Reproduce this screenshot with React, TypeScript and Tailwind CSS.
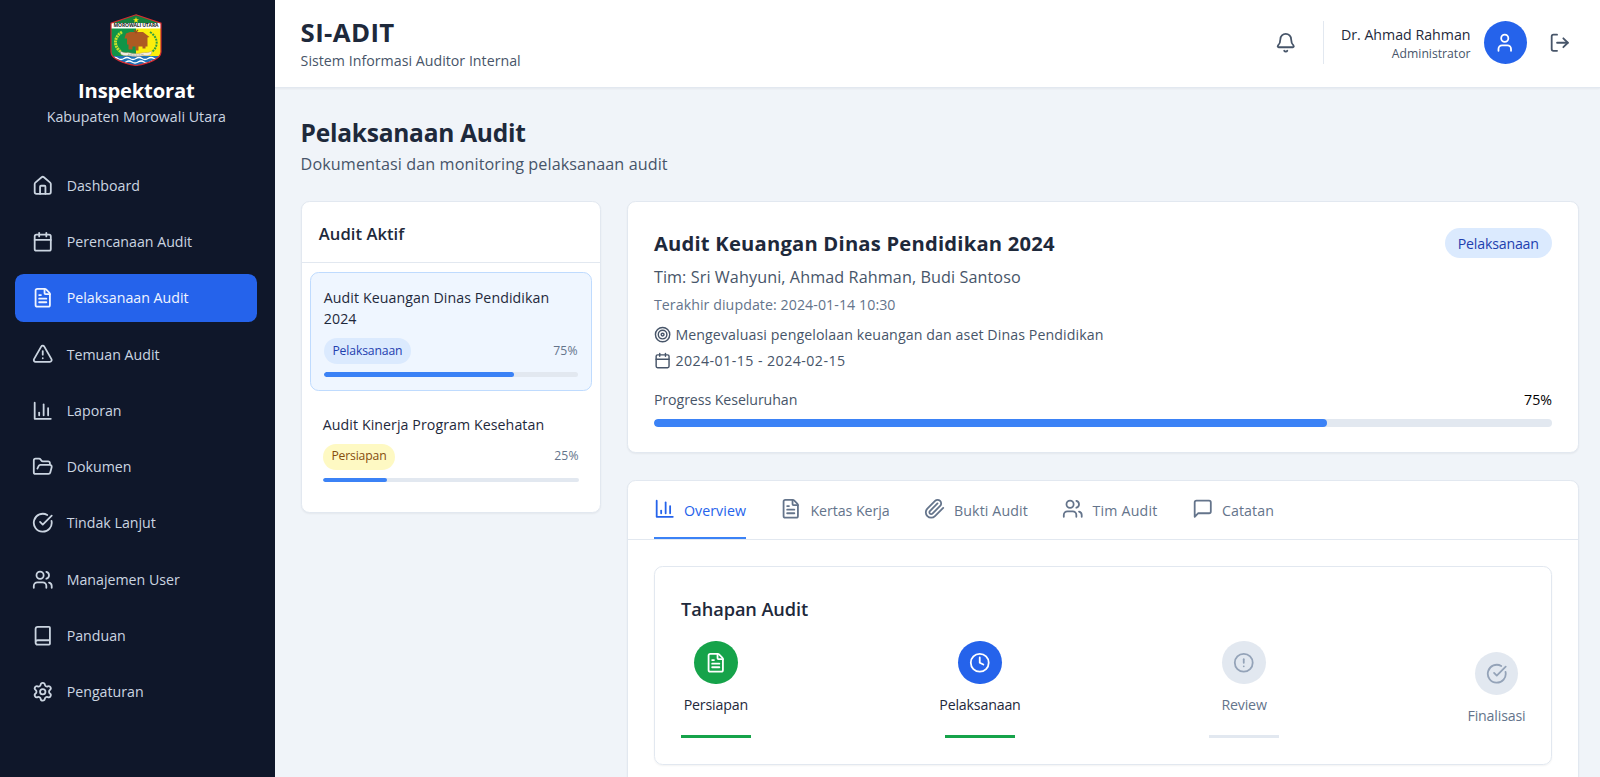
import React from "react";
import {
  Bell,
  Book,
  Calendar,
  CircleAlert,
  CircleCheckBig,
  Clock,
  FileText,
  FolderOpen,
  House,
  LogOut,
  Settings,
  Target,
  TriangleAlert,
  User,
  Users,
} from "lucide-react";

type IconProps = { className?: string };
type IconType = React.ComponentType<IconProps>;

function Stroke({ className, children }: { className?: string; children: React.ReactNode }) {
  return (
    <svg
      viewBox="0 0 24 24"
      fill="none"
      stroke="currentColor"
      strokeWidth="2"
      strokeLinecap="round"
      strokeLinejoin="round"
      className={className}
    >
      {children}
    </svg>
  );
}

const BarChart: IconType = ({ className }) => (
  <Stroke className={className}>
    <path d="M3 3v18h18" />
    <path d="M18 17V9" />
    <path d="M13 17V5" />
    <path d="M8 17v-3" />
  </Stroke>
);

const Clip: IconType = ({ className }) => (
  <Stroke className={className}>
    <path d="m21.44 11.05-9.19 9.19a6 6 0 0 1-8.49-8.49l8.57-8.57A4 4 0 1 1 18 8.84l-8.59 8.57a2 2 0 0 1-2.83-2.83l8.49-8.48" />
  </Stroke>
);

const Message: IconType = ({ className }) => (
  <Stroke className={className}>
    <path d="M21 15a2 2 0 0 1-2 2H7l-4 4V5a2 2 0 0 1 2-2h14a2 2 0 0 1 2 2z" />
  </Stroke>
);

function Crest() {
  return (
    <svg viewBox="0 0 52 52" className="h-[52px] w-[52px] shrink-0">
      <defs>
        <clipPath id="shield">
          <path d="M26 0.8 51 9.2V38c0 7-13 11.500-25 13.500C14 49.500 1 45 1 38V9.200Z" />
        </clipPath>
      </defs>
      <g clipPath="url(#shield)">
        <rect width="26" height="52" fill="#119447" />
        <rect x="26" width="26" height="52" fill="#fbee0c" />
        <path d="M0 10 26 0l26 10Z" fill="#15803d" />
        <rect y="9" width="52" height="5.500" fill="#fff" />
        <rect y="42" width="52" height="10" fill="#1e73b8" />
        <path d="M2 44.500q3-2 6 0t6 0 6 0 6 0 6 0 6 0 6 0 6 0" fill="none" stroke="#fff" strokeWidth="1.300" />
        <path d="M4 48q3-2 6 0t6 0 6 0 6 0 6 0 6 0 6 0" fill="none" stroke="#fff" strokeWidth="1.300" />
      </g>
      <path d="m26 3 .8 2.200h2.300l-1.900 1.400.7 2.200L26 7.500l-1.900 1.300.7-2.200-1.900-1.400h2.300Z" fill="#fde910" />
      <text x="26" y="13.400" textAnchor="middle" textLength="45" fontSize="5" fontWeight="700" fill="#222" fontFamily="Open Sans, sans-serif">
        MOROWALI UTARA
      </text>
      <path d="M12 18C4 23 3 32 11 38" fill="none" stroke="#c6e02c" strokeWidth="3" strokeDasharray="2 .7" />
      <path d="M40 18C48 23 49 32 42 38" fill="none" stroke="#2f9e3f" strokeWidth="2" strokeDasharray="2 1" />
      <path d="m16 19.500 4-1.500h13l6.500 5-2 .5v9h-2v2h-3v-2h-4v4h-3v-4h-3v3h-4v-5h-1.500v-6h-2.500Z" fill="#ad5a22" />
      <path d="m25 19 3-3m-1 3-3-3" stroke="#9a4e1d" strokeWidth="1.200" />
      <path d="M10 37q4 2.500 8 1.500 8 2.500 16 0 4 1 8-1.500l-1 3.500q-4 2-7 1-8 2-16 0-3 1-7-1Z" fill="#f3efe4" stroke="#b98a5e" strokeWidth=".4" />
      <path d="M18 40.200q8 1.800 16 0" fill="none" stroke="#8a8a80" strokeWidth=".8" strokeDasharray="1 .6" />
      <path d="M26 0.800 51 9.200V38c0 7-13 11.500-25 13.500C14 49.500 1 45 1 38V9.200Z" fill="none" stroke="#d3292f" strokeWidth="1.200" />
    </svg>
  );
}

const nav: { label: string; icon: IconType; active?: boolean }[] = [
  { label: "Dashboard", icon: House },
  { label: "Perencanaan Audit", icon: Calendar },
  { label: "Pelaksanaan Audit", icon: FileText, active: true },
  { label: "Temuan Audit", icon: TriangleAlert },
  { label: "Laporan", icon: BarChart },
  { label: "Dokumen", icon: FolderOpen },
  { label: "Tindak Lanjut", icon: CircleCheckBig },
  { label: "Manajemen User", icon: Users },
  { label: "Panduan", icon: Book },
  { label: "Pengaturan", icon: Settings },
];

function Sidebar() {
  return (
    <aside className="flex w-[274.600px] shrink-0 flex-col bg-[#0f172a]">
      <div className="flex flex-col items-center pr-[2px] pt-[14px]">
        <Crest />
        <h1 className="mt-[9px] text-[20.200px] leading-[30px] font-bold tracking-[-0.200px] text-white">Inspektorat</h1>
        <p className="mt-[1px] text-[14.200px] leading-[21.500px] tracking-[0.040px] text-[#cbd5e1]">Kabupaten Morowali Utara</p>
      </div>
      <nav className="mt-[34px] flex flex-col gap-[8.600px] pr-[17.500px] pl-[15px]">
        {nav.map(({ label, icon: Icon, active }) => (
          <a
            key={label}
            className={
              active
                ? "flex h-[47.700px] items-center gap-[13px] rounded-[8.600px] bg-[#2563eb] pl-[17.200px] text-[14.200px] text-[#f1f5ff]"
                : "flex h-[47.700px] items-center gap-[13px] rounded-[8.600px] pl-[17.200px] text-[14.200px] text-[#cbd5e1]"
            }
          >
            <Icon className="h-[21.500px] w-[21.500px]" />
            {label}
          </a>
        ))}
      </nav>
    </aside>
  );
}

function Header() {
  return (
    <header className="flex h-[88px] shrink-0 justify-between border-b border-[#e2e8f0] bg-white pr-[30px] pl-[26px] shadow-xs">
      <div className="pt-[14.500px]">
        <h2 className="text-[25.800px] leading-[34.400px] font-bold tracking-[0.380px] text-[#1e293b]">SI-ADIT</h2>
        <p className="mt-[0.800px] text-[14.200px] leading-[22px] tracking-[0.020px] text-[#475569]">Sistem Informasi Auditor Internal</p>
      </div>
      <div className="flex h-[85px] items-center">
        <Bell className="h-[21.500px] w-[21.500px] text-[#475569]" />
        <div className="ml-[27px] flex h-[43px] items-center border-l border-[#e2e8f0] pl-[16.500px]">
          <div className="pt-[1px] text-right">
            <p className="text-[14.200px] leading-[21.500px] text-[#1e293b]">Dr. Ahmad Rahman</p>
            <p className="text-[12.200px] leading-[17.200px] text-[#475569]">Administrator</p>
          </div>
          <div className="ml-[13px] flex h-[43px] w-[43px] items-center justify-center rounded-full bg-[#2563eb] text-white">
            <User className="h-[21.500px] w-[21.500px]" />
          </div>
        </div>
        <LogOut className="ml-[22px] h-[21.500px] w-[21.500px] text-[#475569]" />
      </div>
    </header>
  );
}

function AuditItem({ title, status, pct, active }: { title: string; status: string; pct: number; active?: boolean }) {
  return (
    <div
      className={
        active
          ? "rounded-[8.600px] border border-[#bfdbfe] bg-[#eff6ff] px-[13px] pt-[14px] pb-[13px]"
          : "rounded-[8.600px] px-[13px] pt-[14px] pb-[13px]"
      }
    >
      <h4 className="text-[14.200px] leading-[21.500px] tracking-[0.070px] text-[#1e293b]">{title}</h4>
      <div className="mt-[8.500px] flex items-center justify-between">
        <span
          className={
            active
              ? "flex h-[26px] items-center rounded-full bg-[#dbeafe] px-[8.600px] text-[12.200px] tracking-[-0.130px] text-[#1e40af]"
              : "flex h-[26px] items-center rounded-full bg-[#fef9c3] px-[8.600px] text-[12.200px] tracking-[-0.160px] text-[#854d0e]"
          }
        >
          {status}
        </span>
        <span className="text-[12.200px] tracking-[0.150px] text-[#64748b]">{pct}%</span>
      </div>
      <div className="mt-[8.200px] h-[4.500px] overflow-hidden rounded-full bg-[#e2e8f0]">
        <div className="h-full rounded-full bg-[#3b82f6]" style={{ width: `${pct}%` }} />
      </div>
    </div>
  );
}

function AuditList() {
  return (
    <section className="h-[311.500px] w-[300.300px] shrink-0 rounded-[8.600px] border border-[#e2e8f0] bg-white shadow-xs">
      <div className="flex h-[60.500px] items-center border-b border-[#e2e8f0] pt-[4.500px] pl-[17.200px]">
        <h3 className="text-[16.600px] font-semibold tracking-[0.050px] text-[#1e293b]">Audit Aktif</h3>
      </div>
      <div className="flex flex-col gap-[8.600px] px-[8.200px] pt-[9px]">
        <AuditItem title="Audit Keuangan Dinas Pendidikan 2024" status="Pelaksanaan" pct={75} active />
        <AuditItem title="Audit Kinerja Program Kesehatan" status="Persiapan" pct={25} />
      </div>
    </section>
  );
}

function Detail() {
  return (
    <section className="rounded-[8.600px] border border-[#e2e8f0] bg-white px-[25.500px] pt-[26px] pb-[25px] shadow-xs">
      <div className="flex items-start justify-between">
        <div>
          <h3 className="text-[20.200px] leading-[30px] font-bold tracking-[0.210px] text-[#1e293b]">
            Audit Keuangan Dinas Pendidikan 2024
          </h3>
          <p className="mt-[6.500px] text-[16.200px] leading-[25.800px] tracking-[0.080px] text-[#475569]">
            Tim: Sri Wahyuni, Ahmad Rahman, Budi Santoso
          </p>
          <p className="mt-[3.200px] text-[14.200px] leading-[21.500px] tracking-[0.070px] text-[#64748b]">
            Terakhir diupdate: 2024-01-14 10:30
          </p>
          <div className="mt-[9px] flex items-center gap-[4.300px] text-[14.200px] leading-[21.500px] tracking-[0.090px] text-[#475569]">
            <Target className="mb-[1px] h-[17.200px] w-[17.200px]" />
            Mengevaluasi pengelolaan keuangan dan aset Dinas Pendidikan
          </div>
          <div className="mt-[4.500px] flex items-center gap-[4.300px] text-[14.200px] leading-[21.500px] tracking-[0.440px] text-[#475569]">
            <Calendar className="mb-[1px] h-[17.200px] w-[17.200px]" />
            2024-01-15 - 2024-02-15
          </div>
        </div>
        <span className="flex h-[30px] items-center rounded-full bg-[#dbeafe] px-[13.200px] text-[14.200px] tracking-[-0.200px] text-[#1e40af]">
          Pelaksanaan
        </span>
      </div>
      <div className="mt-[17px] flex justify-between text-[14.200px] leading-[21.500px]">
        <span className="tracking-[-0.080px] text-[#475569]">Progress Keseluruhan</span>
        <span className="text-black">75%</span>
      </div>
      <div className="mt-[8.500px] h-[8.600px] overflow-hidden rounded-full bg-[#e2e8f0]">
        <div className="h-full w-3/4 rounded-full bg-[#3b82f6]" />
      </div>
    </section>
  );
}

const tabs: { label: string; icon: IconType; tone: string }[] = [
  { label: "Overview", icon: BarChart, tone: "border-[#3b82f6] tracking-[0.060px] text-[#2563eb]" },
  { label: "Kertas Kerja", icon: FileText, tone: "border-transparent tracking-[-0.060px] text-[#64748b]" },
  { label: "Bukti Audit", icon: Clip, tone: "border-transparent tracking-[0.120px] text-[#64748b]" },
  { label: "Tim Audit", icon: Users, tone: "border-transparent tracking-[0.200px] text-[#64748b]" },
  { label: "Catatan", icon: Message, tone: "border-transparent tracking-[0.090px] text-[#64748b]" },
];

const stages: { label: string; icon: IconType; circle: string; text: string; line?: string }[] = [
  { label: "Persiapan", icon: FileText, circle: "bg-[#16a34a] text-white", text: "text-[#1e293b]", line: "bg-[#16a34a]" },
  { label: "Pelaksanaan", icon: Clock, circle: "bg-[#2563eb] text-white", text: "text-[#1e293b]", line: "bg-[#16a34a]" },
  { label: "Review", icon: CircleAlert, circle: "bg-[#e2e8f0] text-[#94a3b8]", text: "text-[#64748b]", line: "bg-[#e2e8f0]" },
  { label: "Finalisasi", icon: CircleCheckBig, circle: "bg-[#e2e8f0] text-[#94a3b8]", text: "text-[#64748b]" },
];

function Workspace() {
  return (
    <section className="h-[400px] shrink-0 rounded-[8.600px] border border-[#e2e8f0] bg-white shadow-xs">
      <div className="flex h-[59px] gap-[34.400px] border-b border-[#e2e8f0] px-[25.500px]">
        {tabs.map(({ label, icon: Icon, tone }) => (
          <div key={label} className={`flex items-center gap-[8.600px] border-b-2 text-[14.200px] ${tone}`}>
            <Icon className="mb-[1px] h-[21.500px] w-[21.500px]" />
            <span className="pt-[2px]">{label}</span>
          </div>
        ))}
      </div>
      <div className="px-[25.500px] pt-[26px]">
        <div className="h-[199px] rounded-[8.600px] border border-[#e2e8f0] pt-[26.200px] pr-[25.500px] pl-[26.200px] shadow-xs">
          <h4 className="text-[18.200px] leading-[30px] font-semibold tracking-[-0.090px] text-[#1e293b]">Tahapan Audit</h4>
          <div className="mt-[17px] flex items-center justify-between">
            {stages.map(({ label, icon: Icon, circle, text, line }) => (
              <div key={label} className="flex flex-col items-center">
                <div className={`flex h-[43.400px] w-[43.400px] items-center justify-center rounded-full ${circle}`}>
                  <Icon className="h-[21.500px] w-[21.500px]" />
                </div>
                <span className={`mt-[10px] text-[14.200px] leading-[21.500px] tracking-[-0.170px] ${text}`}>{label}</span>
                {line && <div className={`mt-[20px] h-[3px] w-[69.500px] ${line}`} />}
              </div>
            ))}
          </div>
        </div>
      </div>
    </section>
  );
}

export default function App() {
  return (
    <div className="flex h-[777px] w-[1600px] overflow-hidden bg-[#f0f4f9] font-['Open_Sans',sans-serif]">
      <Sidebar />
      <div className="flex min-w-0 flex-1 flex-col">
        <Header />
        <main className="flex min-h-0 flex-1 flex-col overflow-hidden pt-[26.500px] pr-[21.500px] pl-[26px]">
          <h2 className="text-[24.500px] leading-[35px] font-bold tracking-[-0.240px] text-[#1e293b]">Pelaksanaan Audit</h2>
          <p className="mt-[2px] text-[16.200px] leading-[25.800px] tracking-[0.080px] text-[#475569]">
            Dokumentasi dan monitoring pelaksanaan audit
          </p>
          <div className="mt-[24px] flex gap-[26.500px]">
            <AuditList />
            <div className="flex min-w-0 flex-1 flex-col gap-[27px]">
              <Detail />
              <Workspace />
            </div>
          </div>
        </main>
      </div>
    </div>
  );
}
